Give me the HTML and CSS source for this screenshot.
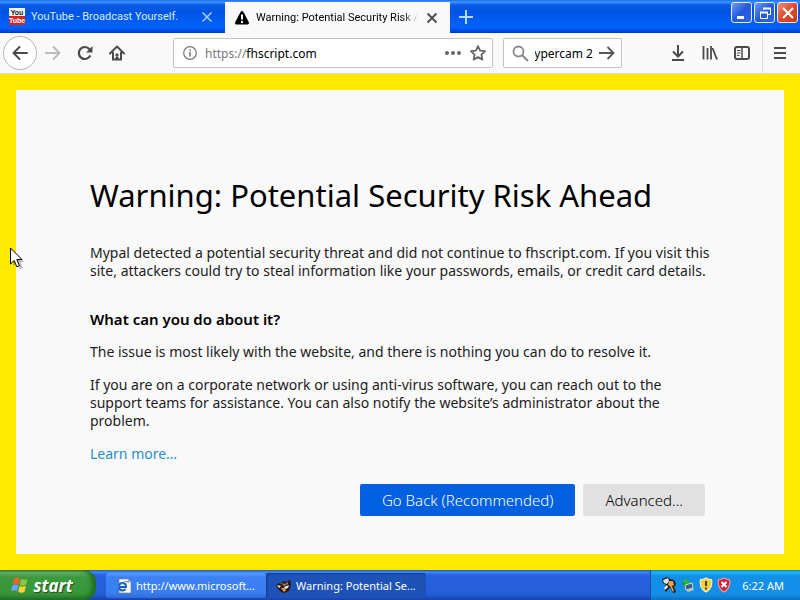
FILE: index.html
```html
<!DOCTYPE html>
<html lang="en">
<head>
<meta charset="utf-8">
<title>Warning: Potential Security Risk Ahead</title>
<link rel="stylesheet" href="styles.css">
</head>
<body>
<header class="tabbar">
  <div class="tab">
    <svg class="favicon" width="18" height="18" viewBox="0 0 18 18">
      <rect x="1" y="0" width="16" height="8" fill="#f6f6f6"/>
      <rect x="1" y="8" width="16" height="9" rx="2" fill="#e0201c"/>
      <text x="9" y="7" class="logo-text" fill="#111">You</text>
      <text x="9" y="15" class="logo-text" fill="#fff">Tube</text>
    </svg>
    <span class="tab-title">YouTube - Broadcast Yourself.</span>
    <button class="tab-close" aria-label="Close tab"><svg width="12" height="12" viewBox="0 0 12 12"><path d="M1.500 1.500l9 9m0-9l-9 9" stroke="#a9d2ff" stroke-width="1.500"/></svg></button>
  </div>
  <div class="tab active">
    <svg class="favicon" width="18" height="18" viewBox="0 0 18 18"><path d="M9 3.500L14.500 14h-11z" fill="#000" stroke="#000" stroke-width="3" stroke-linejoin="round"/><path d="M9 5.500v5" stroke="#fff" stroke-width="2"/><circle cx="9" cy="13" r="1.200" fill="#fff"/></svg>
    <span class="tab-title">Warning: Potential Security Risk Ahead</span>
    <button class="tab-close" aria-label="Close tab"><svg width="12" height="12" viewBox="0 0 12 12"><path d="M1.500 1.500l9 9m0-9l-9 9" stroke="#4a4a4a" stroke-width="1.800"/></svg></button>
  </div>
  <button class="new-tab" aria-label="New tab"><svg width="14" height="14" viewBox="0 0 14 14"><path d="M7 0v14M0 7h14" stroke="#b5d8ff" stroke-width="2"/></svg></button>
  <div class="window-buttons">
    <button aria-label="Minimize"><svg width="18" height="18" viewBox="0 0 18 18"><path d="M4 13.500h7" stroke="#fff" stroke-width="3"/></svg></button>
    <button aria-label="Restore"><svg width="18" height="18" viewBox="0 0 18 18" fill="none" stroke="#fff"><path d="M7.500 6V4.500h7v6H12"/><path d="M7 4.500h8" stroke-width="2"/><path d="M4.500 8.500h7v6h-7z"/><path d="M4 8.500h8" stroke-width="2"/></svg></button>
    <button class="close" aria-label="Close"><svg width="18" height="18" viewBox="0 0 18 18"><path d="M4 4l10 10M14 4L4 14" stroke="#fff" stroke-width="2.200"/></svg></button>
  </div>
</header>
<nav class="toolbar">
  <button class="tool back" aria-label="Back"><svg width="16" height="16" viewBox="0 0 16 16"><path d="M15 8H2M7.500 2L1.500 8l6 6" fill="none" stroke="#4a4a4a" stroke-width="2" stroke-linecap="round" stroke-linejoin="round"/></svg></button>
  <button class="tool" aria-label="Forward"><svg width="16" height="16" viewBox="0 0 16 16"><path d="M1 8h13M8.500 2l6 6-6 6" fill="none" stroke="#bbb" stroke-width="2" stroke-linecap="round" stroke-linejoin="round"/></svg></button>
  <button class="tool" aria-label="Reload"><svg width="16" height="16" viewBox="0 0 16 16"><path d="M13.300 10.500A6 6 0 1 1 12.500 4.200" fill="none" stroke="#4a4a4a" stroke-width="2.200"/><path d="M15.500 1v6.500H9z" fill="#4a4a4a"/></svg></button>
  <button class="tool" aria-label="Home"><svg width="16" height="16" viewBox="0 0 16 16"><path d="M1 8.500L8 1.500l7 7" fill="none" stroke="#4a4a4a" stroke-width="2" stroke-linecap="round" stroke-linejoin="round"/><path d="M4 7v7.500h8V7" fill="none" stroke="#4a4a4a" stroke-width="2"/><path d="M7 9h2v2H7zM7 12h2v2H7z" fill="#4a4a4a" stroke="#4a4a4a"/></svg></button>
  <div class="field address">
    <svg width="14" height="14" viewBox="0 0 14 14"><circle cx="7" cy="7" r="6.300" fill="none" stroke="#777" stroke-width="1.200"/><path d="M7 6v4.500M7 3.200v1.600" stroke="#777" stroke-width="1.600"/></svg>
    <div class="url" role="textbox" aria-label="Address"><span>https://</span>fhscript.com</div>
    <button aria-label="Page actions"><svg width="16" height="16" viewBox="0 0 16 16" fill="#666"><circle cx="2" cy="8" r="2"/><circle cx="8" cy="8" r="2"/><circle cx="14" cy="8" r="2"/></svg></button>
    <button aria-label="Bookmark"><svg width="18" height="18" viewBox="0 0 18 18"><path d="M9 2l2.100 4.600 5 .6-3.700 3.400 1 5L9 13.100l-4.400 2.500 1-5L1.900 7.200l5-.6z" fill="none" stroke="#666" stroke-width="1.800" stroke-linejoin="round"/></svg></button>
  </div>
  <div class="field search">
    <svg width="17" height="17" viewBox="0 0 17 17"><circle cx="6.500" cy="6.500" r="5" fill="none" stroke="#888" stroke-width="1.800"/><path d="M10 10l6 6" stroke="#888" stroke-width="2"/></svg>
    <label class="query"><input type="text" aria-label="Search" value="hypercam 2"></label>
    <button aria-label="Search"><svg width="16" height="16" viewBox="0 0 16 16"><path d="M0 8h14M8.500 2l6 6-6 6" fill="none" stroke="#555" stroke-width="1.800"/></svg></button>
  </div>
  <div class="actions">
    <button class="tool" aria-label="Downloads"><svg width="16" height="16" viewBox="0 0 16 16"><path d="M8 0v11M3 6.500l5 5 5-5M2 15h12" fill="none" stroke="#4a4a4a" stroke-width="2"/></svg></button>
    <button class="tool" aria-label="Library"><svg width="16" height="16" viewBox="0 0 16 16"><path d="M1.500 1v13.500M5.500 3v11.500M9 1v13.500M10.500 3L15 14.500" fill="none" stroke="#4a4a4a" stroke-width="1.800"/></svg></button>
    <button class="tool" aria-label="Sidebar"><svg width="16" height="16" viewBox="0 0 16 16"><rect x="1" y="2" width="14" height="12" rx="2" fill="none" stroke="#4a4a4a" stroke-width="2"/><path d="M8 2v12" stroke="#4a4a4a" stroke-width="1.500"/><path d="M3 5.500h3.500M3 8h3.500M3 10.500h2.500" stroke="#4a4a4a"/></svg></button>
    <button class="tool menu" aria-label="Menu"><svg width="14" height="14" viewBox="0 0 14 14"><path d="M1 2h12M1 7h12M1 12h12" stroke="#4a4a4a" stroke-width="2"/></svg></button>
  </div>
</nav>
<main class="page">
  <section class="notice">
    <div class="content">
      <h1>Warning: Potential Security Risk Ahead</h1>
      <p>Mypal detected a potential security threat and did not continue to fhscript.com. If you visit this site, attackers could try to steal information like your passwords, emails, or credit card details.</p>
      <h2>What can you do about it?</h2>
      <p>The issue is most likely with the website, and there is nothing you can do to resolve it.</p>
      <p>If you are on a corporate network or using anti-virus software, you can reach out to the support teams for assistance. You can also notify the website’s administrator about the problem.</p>
      <p><a href="#">Learn more…</a></p>
      <div class="buttons">
        <button class="primary">Go Back (Recommended)</button>
        <button class="secondary">Advanced...</button>
      </div>
    </div>
  </section>
</main>
<footer class="taskbar">
  <button class="start">
    <svg width="18" height="18" viewBox="0 0 18 18"><path d="M3 2.500q3-1.800 6 0L7.700 8.300q-2.800-1.700-6-.1z" fill="#f0622d"/><path d="M10 3q3 1.600 6.500.1L15 9q-3.200 1.500-6.300-.1z" fill="#8ac73e"/><path d="M1.400 9.300q3-1.600 6 .1L6.100 15Q3.300 13.300 0 15z" fill="#6aa4f6"/><path d="M8.500 10q3 1.600 6.400.1L13.500 16q-3.300 1.400-6.300-.2z" fill="#fbd03a"/></svg>
    start
  </button>
  <button class="task">
    <svg width="16" height="16" viewBox="0 0 16 16"><path d="M3 1h9l3 3v11H3z" fill="#f7f7ee" stroke="#777" stroke-width=".6"/><path d="M12 1v3h3z" fill="#aaa"/><path d="M3 9h7q0-4-3.500-4T3 8.700 6.500 12.500q2 0 3.200-1.500" fill="none" stroke="#155fc4" stroke-width="2"/><path d="M1 13Q0 10 5 6t8-2" fill="none" stroke="#3a8ae0"/></svg>
    <span>http://www.microsoft...</span>
  </button>
  <button class="task current">
    <svg width="16" height="16" viewBox="0 0 16 16"><path d="M0 7l3-2 2 1 2-3 3 1 4-2 1 4-1 4-1 3-4 2-4-1-3-3z" fill="#2a1a14"/><path d="M5 5l4 1 3-2v2L8 8z" fill="#b4794a"/><path d="M1 7l4 1-2 2zM8 9l5-2-1 3-3 1z" fill="#f2ece4"/><path d="M5 10l3 0 2 2-2 2z" fill="#e0a468"/></svg>
    <span>Warning: Potential Se...</span>
  </button>
  <div class="tray">
    <svg width="16" height="18" viewBox="0 0 16 18"><path d="M1 3l5-2 3 2 4 1 2 4-2 3 2 5-3 1-3-6-4 5-2-3 2-4-3-2z" fill="#1c1a1a"/><path d="M2 4l5-2 1 3-2 3-3-1z" fill="#d8e4ea"/><path d="M8 5l4 0 1 4-2 1 2 5-1 1-3-6-2-1z" fill="#f0a04b"/><path d="M6 9l1 2-3 3-1-2z" fill="#fff"/></svg>
    <svg width="14" height="16" viewBox="0 0 14 16"><path d="M1 5l5-4v3q3 0 4 3l-3-1-1 2z" fill="#27b62f"/><path d="M1 5q1 5 4 7l1-4z" fill="#1d8f2b"/><path d="M4 8l7-2 1 5-7 2z" fill="#3a5f7c" stroke="#c9dbe4"/><path d="M5 13l7-2 1 2-6 2z" fill="#b9c4bd"/></svg>
    <svg width="14" height="16" viewBox="0 0 14 16"><path d="M7 1q3 2 5.500 1.500Q14 11 7 15 0 11 1.500 2.500 4 3 7 1z" fill="#f6cf2d" stroke="#e9edcf" stroke-width="1.200"/><path d="M7 4v5M7 10.500v2" stroke="#3b3520" stroke-width="1.800"/></svg>
    <svg width="14" height="16" viewBox="0 0 14 16"><path d="M7 1q3 2 5.500 1.500Q14 11 7 15 0 11 1.500 2.500 4 3 7 1z" fill="#d81f36" stroke="#e6929c" stroke-width="1.200"/><path d="M4.500 5l5 5m0-5l-5 5" stroke="#fff" stroke-width="2"/></svg>
    <time>6:22 AM</time>
  </div>
</footer>
<svg class="cursor" width="14" height="23" viewBox="0 0 14 23"><path d="M3 4v15l4-3 3 6 3-1-3-6h4z" fill="#000" opacity=".25"/><path d="M.5 1v16l3.700-3.500 2.600 6.300 2.600-1.100L6.800 12.500H12z" fill="#fff" stroke="#000"/></svg>
</body>
</html>
```
FILE: styles.css
```css
* { box-sizing: border-box; }
html, body { height: 100%; }
body {
  margin: 0;
  display: flex;
  flex-direction: column;
  min-height: 100vh;
  font-family: "Noto Sans", "Open Sans", sans-serif;
  font-size: 12px;
  color: #000;
  overflow: hidden;
}
button {
  font: inherit;
  border: 0;
  padding: 0;
  background: none;
  display: flex;
  align-items: center;
  justify-content: center;
}
svg { flex: none; display: block; }

.tabbar {
  height: 33px;
  flex: none;
  display: flex;
  background: linear-gradient(#1c6cf2 0, #3d95ff 2px, #0a5be6 5px, #0054e3 12px, #0062fb 26px, #0058ee 29px, #0038c4 33px);
}
.tab {
  display: flex;
  align-items: center;
  width: 225px;
  padding: 0 9px 0 8px;
  gap: 5px;
  font-family: Roboto, sans-serif;
  font-size: 11px;
  color: #d5ecff;
}
.tab.active { background: #f9f9fa; color: #000; margin-top: 2px; }
.tab-title {
  flex: 1;
  overflow: hidden;
  white-space: nowrap;
}
.active .tab-title { mask-image: linear-gradient(to right, #000 90%, transparent); }
.tab-close { width: 18px; height: 18px; }
.logo-text {
  font: bold 7px "Liberation Sans", sans-serif;
  text-anchor: middle;
}
.new-tab { width: 32px; }
.window-buttons { margin-left: auto; display: flex; gap: 2px; padding: 2px 2px 0 0; }
.window-buttons button {
  width: 21px;
  height: 21px;
  border: 1px solid #e4ecff;
  border-radius: 3px;
  background: linear-gradient(135deg, #6f9cf5, #2559dc 50%, #2b66e8);
}
.window-buttons .close { background: linear-gradient(135deg, #f0937a, #e0492a 50%, #c83a18); }

.toolbar {
  height: 41px;
  flex: none;
  display: flex;
  align-items: center;
  padding: 0 3px;
  background: #f9f9fa;
  border-bottom: 1px solid #d8d8d0;
}
.tool { width: 32px; height: 32px; flex: none; }
.back {
  width: 34px;
  height: 34px;
  border: 1px solid #b4b4b4;
  border-radius: 50%;
  background: #fff;
}
.field {
  display: flex;
  align-items: center;
  height: 30px;
  background: #fff;
  border: 1px solid #c3c3c6;
  border-radius: 2px;
}
.address { flex: 1; margin-left: 40px; padding: 0 5px 0 9px; gap: 8px; }
.url { flex: 1; }
.url span { color: #777; }
.search { width: 119px; margin-left: 10px; padding: 0 6px 0 8px; gap: 6px; }
.query { flex: 1; min-width: 0; display: flex; justify-content: flex-end; overflow: hidden; }
.query input {
  width: 80px;
  flex: none;
  border: 0;
  padding: 0;
  outline: 0;
  background: none;
  font: inherit;
  text-align: right;
}
.actions { display: flex; align-items: center; margin-left: 40px; }
.menu { width: 35px; height: 40px; margin-left: 4px; border-left: 1px solid #dedede; }

.page { flex: 1; padding: 16px; background: #ffe900; }
.notice { height: 100%; background: #f9f9fa; padding: 84px 74px 0; }
.content { max-width: 620px; font-size: 14px; line-height: 18px; color: #1c1c1c; }
h1 { margin: 0 0 28px; font-size: 31px; line-height: 42px; font-weight: 400; color: #000; white-space: nowrap; }
p { margin: 0 0 15px; }
h2 { margin: 30px 0 15px; font-size: 15px; line-height: 18px; font-weight: 600; color: #000; }
a { color: #2a8fc6; text-decoration: none; }
.buttons { display: flex; justify-content: flex-end; gap: 8px; padding: 6px 5px 0 0; }
.buttons button { height: 32px; padding: 0 22px; border-radius: 2px; font-size: 15px; font-weight: 300; }
.primary { background: #0060df; color: #fff; }
.secondary { background: #e1e1e2; color: #000; }

.taskbar {
  height: 30px;
  flex: none;
  display: flex;
  align-items: center;
  font-size: 11px;
  background: linear-gradient(#1e4fb4 0, #3f8cf3 2px, #2663e0 5px, #245edb 24px, #1941a5 30px);
}
.start {
  width: 96px;
  height: 30px;
  gap: 4px;
  padding-right: 12px;
  border-radius: 0 12px 12px 0;
  color: #fff;
  font: italic bold 17px "Open Sans", sans-serif;
  text-shadow: 1px 1px 1px #234d1d;
  background: linear-gradient(#2b7a33 0, #6cb56a 2px, #3c9a3f 7px, #379637 24px, #23702a 30px);
  box-shadow: inset -4px 0 5px #1c6a25;
}
.task {
  width: 160px;
  height: 25px;
  margin: 1px 0 0 10px;
  padding: 0 10px;
  gap: 4px;
  justify-content: flex-start;
  border-radius: 3px;
  color: #fff;
  white-space: nowrap;
  background: linear-gradient(#5c9bfb, #3c81f3 4px, #3a7ef0 20px, #2d69d8);
}
.current { margin-left: 0; background: #1e52b7; box-shadow: inset 1px 1px 2px #103a8c; }
.tray {
  height: 30px;
  margin-left: auto;
  display: flex;
  align-items: center;
  gap: 4px;
  padding: 0 16px 0 10px;
  color: #fff;
  border-left: 1px solid #0d4fa8;
  background: linear-gradient(#0f78cf 0, #19b9f3 2px, #1290e8 6px, #1290e8 24px, #0f6fc0 30px);
}
.tray time { margin-left: 7px; }
.cursor { position: absolute; left: 10px; top: 247px; }
```
